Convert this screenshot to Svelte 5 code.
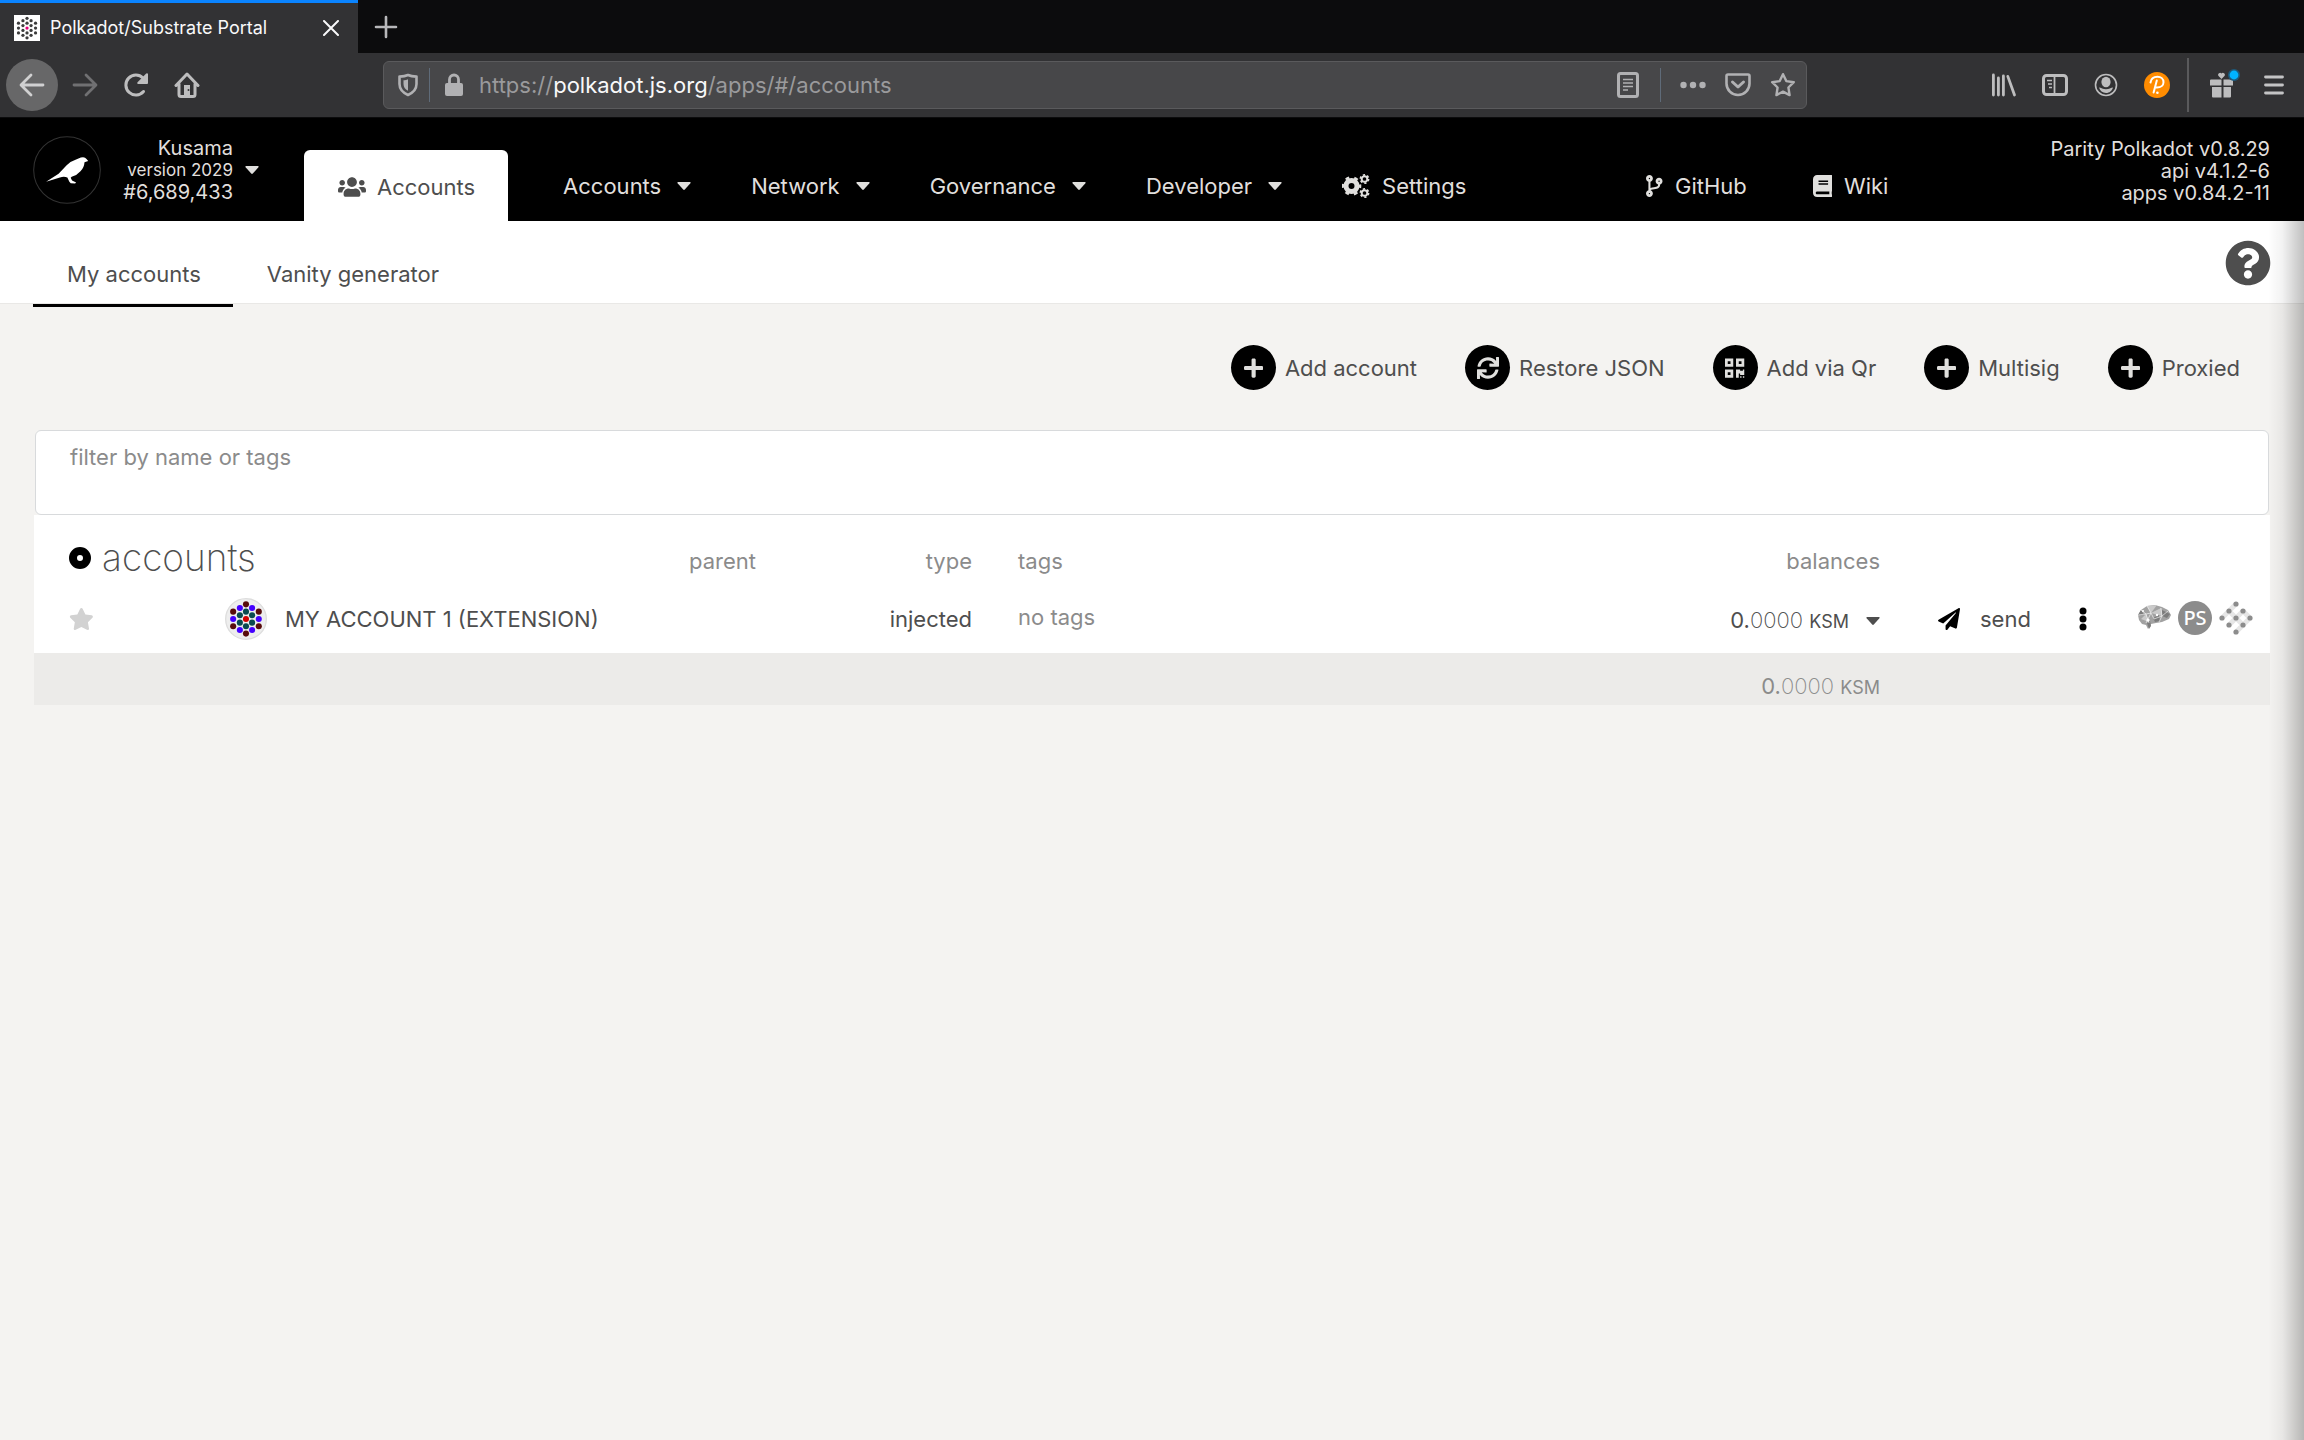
<script lang="ts">
    // tabs of the top menu that open a dropdown
    var groups = ['Accounts', 'Network', 'Governance', 'Developer'];

    var icons = {
        users: { w: 640, d: 'M96 224c35.3 0 64-28.7 64-64s-28.7-64-64-64-64 28.7-64 64 28.7 64 64 64zm448 0c35.3 0 64-28.7 64-64s-28.7-64-64-64-64 28.7-64 64 28.7 64 64 64zm32 32h-64c-17.6 0-33.5 7.1-45.1 18.6 40.3 22.1 68.9 62 75.1 109.4h66c17.7 0 32-14.3 32-32v-32c0-35.3-28.7-64-64-64zm-256 0c61.9 0 112-50.1 112-112S381.9 32 320 32 208 82.1 208 144s50.1 112 112 112zm76.8 32h-8.3c-20.8 10-43.9 16-68.5 16s-47.6-6-68.5-16h-8.3C179.6 288 128 339.6 128 403.2V432c0 26.5 21.5 48 48 48h288c26.5 0 48-21.5 48-48v-28.8c0-63.6-51.6-115.2-115.2-115.2zm-223.7-13.4C161.5 263.1 145.6 256 128 256H64c-35.3 0-64 28.7-64 64v32c0 17.7 14.3 32 32 32h65.9c6.3-47.4 34.9-87.3 75.2-109.4z' },
        branch: { w: 384, d: 'M384 144c0-44.2-35.8-80-80-80s-80 35.8-80 80c0 36.4 24.3 67.1 57.5 76.8-.6 16.1-4.2 28.5-11 36.9-15.4 19.2-49.3 22.4-85.2 25.7-28.2 2.6-57.4 5.4-81.3 16.9v-144c32.5-10.2 56-40.5 56-76.3 0-44.2-35.8-80-80-80S0 35.8 0 80c0 35.8 23.5 66.1 56 76.3v199.3C23.5 365.9 0 396.2 0 432c0 44.2 35.8 80 80 80s80-35.8 80-80c0-34-21.2-63.1-51.2-74.6 3.1-5.2 7.8-9.8 14.9-13.4 16.2-8.2 40.4-10.4 66.1-12.8 42.2-3.9 90-8.4 118.2-43.4 14-17.4 21.1-39.8 21.6-67.9 31.6-10.8 54.4-40.7 54.4-75.9zM80 64c8.8 0 16 7.2 16 16s-7.2 16-16 16-16-7.2-16-16 7.2-16 16-16zm0 384c-8.8 0-16-7.2-16-16s7.2-16 16-16 16 7.2 16 16-7.2 16-16 16zm224-320c8.8 0 16 7.2 16 16s-7.2 16-16 16-16-7.2-16-16 7.2-16 16-16z' },
        book: { w: 448, d: 'M448 360V24c0-13.3-10.7-24-24-24H96C43 0 0 43 0 96v320c0 53 43 96 96 96h328c13.3 0 24-10.7 24-24v-16c0-7.5-3.5-14.3-8.9-18.7-4.2-15.4-4.2-59.3 0-74.7 5.4-4.3 8.9-11.1 8.9-18.6zM128 134c0-3.3 2.7-6 6-6h212c3.3 0 6 2.7 6 6v20c0 3.3-2.7 6-6 6H134c-3.3 0-6-2.7-6-6v-20zm0 64c0-3.3 2.7-6 6-6h212c3.3 0 6 2.7 6 6v20c0 3.3-2.7 6-6 6H134c-3.3 0-6-2.7-6-6v-20zm253.4 250H96c-17.7 0-32-14.3-32-32 0-17.6 14.4-32 32-32h285.4c-1.9 17.1-1.9 46.9 0 64z' },
        help: { w: 512, d: 'M504 256c0 136.997-111.043 248-248 248S8 392.997 8 256C8 119.083 119.043 8 256 8s248 111.083 248 248zM262.655 90c-54.497 0-89.255 22.957-116.549 63.758-3.536 5.286-2.353 12.415 2.715 16.258l34.699 26.31c5.205 3.947 12.621 3.008 16.665-2.122 17.864-22.658 30.113-35.797 57.303-35.797 20.429 0 45.698 13.148 45.698 32.958 0 14.976-12.363 22.667-32.534 33.976C247.128 238.528 216 254.941 216 296v4c0 6.627 5.373 12 12 12h56c6.627 0 12-5.373 12-12v-1.333c0-28.462 83.186-29.647 83.186-106.667 0-58.002-60.165-102-116.531-102zM256 338c-25.365 0-46 20.635-46 46 0 25.364 20.635 46 46 46s46-20.636 46-46c0-25.365-20.635-46-46-46z' },
        plus: { w: 448, d: 'M416 208H272V64c0-17.67-14.33-32-32-32h-32c-17.67 0-32 14.33-32 32v144H32c-17.67 0-32 14.33-32 32v32c0 17.67 14.33 32 32 32h144v144c0 17.67 14.33 32 32 32h32c17.67 0 32-14.33 32-32V304h144c17.67 0 32-14.33 32-32v-32c0-17.67-14.33-32-32-32z' },
        sync: { w: 512, d: 'M440.65 12.57l4 82.77A247.16 247.16 0 0 0 255.83 8C134.73 8 33.91 94.92 12.29 209.82A12 12 0 0 0 24.09 224h49.05a12 12 0 0 0 11.67-9.26 175.91 175.91 0 0 1 317-56.94l-101.46-4.86a12 12 0 0 0-12.57 12v47.41a12 12 0 0 0 12 12H500a12 12 0 0 0 12-12V12a12 12 0 0 0-12-12h-47.37a12 12 0 0 0-11.98 12.57zM255.83 432a175.61 175.61 0 0 1-146-77.8l101.8 4.87a12 12 0 0 0 12.57-12v-47.4a12 12 0 0 0-12-12H12a12 12 0 0 0-12 12V500a12 12 0 0 0 12 12h47.35a12 12 0 0 0 12-12.6l-4.15-82.57A247.17 247.17 0 0 0 255.83 504c121.11 0 221.93-86.92 243.55-201.82a12 12 0 0 0-11.8-14.18h-49.05a12 12 0 0 0-11.67 9.26A175.86 175.86 0 0 1 255.83 432z' },
        qr: { w: 448, d: 'M0 224h192V32H0v192zM64 96h64v64H64V96zm192-64v192h192V32H256zm128 128h-64V96h64v64zM0 480h192V288H0v192zm64-128h64v64H64v-64zm352-64h32v128h-96v-32h-32v96h-64V288h96v32h64v-32zm0 160h32v32h-32v-32zm-64 0h32v32h-32v-32z' },
        star: { w: 576, d: 'M259.3 17.8L194 150.2 47.9 171.5c-26.2 3.8-36.7 36.1-17.7 54.6l105.7 103-25 145.5c-4.5 26.3 23.2 46 46.4 33.7L288 439.6l130.7 68.7c23.2 12.2 50.9-7.4 46.4-33.7l-25-145.5 105.7-103c19-18.5 8.5-50.8-17.7-54.6L382 150.2 316.7 17.8c-11.7-23.6-45.6-23.9-57.4 0z' },
        plane: { w: 512, d: 'M476 3.2L12.5 270.6c-18.1 10.4-15.8 35.6 2.2 43.2L121 358.4l287.3-253.2c5.5-4.9 13.3 2.6 8.6 8.3L176 407v80.5c0 23.6 28.5 32.9 42.5 15.8L282 426l124.6 52.2c14.2 6 30.4-2.9 33-18.2l72-432C515 7.8 493.3-6.8 476 3.2z' }
    };

    var actions = [
        { label: 'Add account', icon: 'plus' },
        { label: 'Restore JSON', icon: 'sync' },
        { label: 'Add via Qr', icon: 'qr' },
        { label: 'Multisig', icon: 'plus' },
        { label: 'Proxied', icon: 'plus' }
    ];

    // the 19 dots of a polkadot identicon, in a 64x64 box
    var dots: number[][] = [
        [32, 8, 0], [32, 20, 2], [32, 32, 3], [32, 44, 2], [32, 56, 0],
        [22, 14, 1], [22, 26, 2], [22, 38, 2], [22, 50, 1],
        [42, 14, 1], [42, 26, 2], [42, 38, 2], [42, 50, 1],
        [11, 20, 0], [11, 32, 1], [11, 44, 0],
        [53, 20, 0], [53, 32, 1], [53, 44, 0]
    ];
    var dotColors = ['#580c0c', '#4400ff', '#0a4a50', '#d40000'];

    var substrateDots = [[17, 3], [10, 10], [24, 10], [3, 17], [17, 17], [31, 17], [10, 24], [24, 24], [17, 31]];

    var filter = '';
    var favorite = false;
</script>

{#snippet icon(name, cls)}
    <svg class="icon {cls}" viewBox="0 0 {icons[name].w} 512" aria-hidden="true"><path fill="currentColor" d={icons[name].d} /></svg>
{/snippet}

{#snippet caret()}
    <svg class="caret" viewBox="0 0 14 8" aria-hidden="true"><path fill="currentColor" d="M1 0h12q1 .4.4 1.2L7.8 7.5q-.8.8-1.6 0L.6 1.2Q0 .4 1 0z" /></svg>
{/snippet}

<div class="browser">
    <div class="tab-strip">
        <div class="browser-tab">
            <svg class="favicon" viewBox="0 0 64 64" aria-hidden="true">
                <rect width="64" height="64" fill="#fff" />
                {#each dots as dot}
                    <circle cx={dot[0]} cy={dot[1]} r="4" fill={dot[2] === 3 ? '#e6007a' : '#3c3c3c'} />
                {/each}
            </svg>
            <span class="browser-tab-title">Polkadot/Substrate Portal</span>
            <button class="chrome-button" aria-label="Close tab">
                <svg class="s16" viewBox="0 0 16 16"><path d="M1 1l14 14M15 1L1 15" stroke="#f9f9fa" stroke-width="2" stroke-linecap="round" /></svg>
            </button>
        </div>
        <button class="chrome-button new-tab" aria-label="New tab">
            <svg class="s24" viewBox="0 0 24 24"><path d="M12 2v20M2 12h20" stroke="#b8b8ba" stroke-width="2.6" stroke-linecap="round" /></svg>
        </button>
    </div>

    <div class="toolbar">
        <div class="toolbar-left">
            <button class="chrome-button back" aria-label="Back">
                <svg class="s26" viewBox="0 0 26 26"><path d="M24 13H3M12 3L2 13l10 10" fill="none" stroke="#d0d0d1" stroke-width="2.8" stroke-linecap="round" stroke-linejoin="round" /></svg>
            </button>
            <button class="chrome-button" aria-label="Forward">
                <svg class="s26" viewBox="0 0 26 26"><path d="M2 13h21M14 3l10 10-10 10" fill="none" stroke="#707072" stroke-width="2.8" stroke-linecap="round" stroke-linejoin="round" /></svg>
            </button>
            <button class="chrome-button" aria-label="Reload">
                <svg class="s26" viewBox="0 0 26 26"><path d="M20.5 19.5A10 10 0 1 1 20 6l2.500 2.500" fill="none" stroke="#bdbdbe" stroke-width="3" stroke-linecap="round" /><path d="M25 2v9q0 1-1 1h-9q-1.500-.5-.5-1.700L23.200 1.600Q24.500.5 25 2z" fill="#bdbdbe" /></svg>
            </button>
            <button class="chrome-button" aria-label="Home">
                <svg class="s26" viewBox="0 0 26 26"><path d="M2 13.500L13 2l11 11.500M5 12v10.500q0 2 2 2h12q2 0 2-2V12" fill="none" stroke="#bdbdbe" stroke-width="3" stroke-linecap="round" stroke-linejoin="round" /><path d="M10 13h6v11h-6z" fill="#bdbdbe" /><circle cx="14.500" cy="18" r="1" fill="#323234" /></svg>
            </button>
        </div>

        <div class="address-bar">
            <svg class="s24" viewBox="0 0 24 24"><path d="M12 2c3 1.500 5.500 1.600 8.500 1.600V11c0 5-3.500 8.700-8.500 11-5-2.300-8.500-6-8.500-11V3.600C6.500 3.600 9 3.500 12 2z" fill="none" stroke="#b1b1b3" stroke-width="2.6" stroke-linejoin="round" /><path d="M12 6.200v11.600C9 16.300 7.500 14 7.500 11V7.200c1.700 0 3-.2 4.500-1z" fill="#b1b1b3" /></svg>
            <span class="bar-line"></span>
            <svg class="s24" viewBox="0 0 24 24"><path d="M7.500 12V6.500a4.500 4.500 0 0 1 9 0V12" fill="none" stroke="#b1b1b3" stroke-width="2.8" /><rect x="3" y="10" width="18" height="13" rx="2" fill="#b1b1b3" /></svg>
            <div class="address" role="textbox" tabindex="0" aria-label="Address" contenteditable="true">https://<b>polkadot.js.org</b>/apps/#/accounts</div>
            <button class="chrome-button" aria-label="Reader view">
                <svg class="s26" viewBox="0 0 26 26"><rect x="3.500" y="1.500" width="19" height="23" rx="2" fill="none" stroke="#b1b1b3" stroke-width="3" /><path d="M8 7.500h10M8 11h10M8 14.500h10M8 18h5" stroke="#b1b1b3" stroke-width="1.4" /></svg>
            </button>
            <span class="bar-line wide"></span>
            <button class="chrome-button" aria-label="Page actions">
                <svg class="s26" viewBox="0 0 26 26" fill="#b1b1b3"><circle cx="3.500" cy="13" r="3.200" /><circle cx="13" cy="13" r="3.200" /><circle cx="22.500" cy="13" r="3.200" /></svg>
            </button>
            <button class="chrome-button" aria-label="Save to Pocket">
                <svg class="s26" viewBox="0 0 26 26" fill="none" stroke="#b1b1b3" stroke-width="2.6" stroke-linecap="round" stroke-linejoin="round"><path d="M3 2.500h20q1.500 0 1.500 1.500v7.500a11.500 11.500 0 0 1-23 0V4q0-1.500 1.500-1.500z" /><path d="M7.500 10l5.500 5 5.500-5" stroke-width="3" /></svg>
            </button>
            <button class="chrome-button" aria-label="Bookmark">
                <svg class="s26" viewBox="0 0 26 26"><path d="M13 2.200l3.300 6.900 7.500 1.100-5.400 5.300 1.200 7.600L13 19.600l-6.600 3.500 1.200-7.600-5.400-5.300 7.500-1.100z" fill="none" stroke="#b1b1b3" stroke-width="2.4" stroke-linejoin="round" /></svg>
            </button>
        </div>

        <div class="toolbar-right">
            <button class="chrome-button" aria-label="Library">
                <svg class="s26" viewBox="0 0 26 26" stroke="#bdbdbe" stroke-width="2.8" stroke-linecap="round"><path d="M2.400 3v20M7.400 6v17M12.400 4v19M16.800 4.400L23.500 23" /></svg>
            </button>
            <button class="chrome-button" aria-label="Sidebar">
                <svg class="s26" viewBox="0 0 26 26" fill="none" stroke="#bdbdbe"><rect x="1.500" y="3.500" width="23" height="19" rx="3" stroke-width="3" /><path d="M12.500 3v20" stroke-width="1.8" /><path d="M5 8.500h5M6 12h4M7 15.500h3" stroke-width="1.6" /></svg>
            </button>
            <button class="chrome-button" aria-label="Profile">
                <svg class="s26" viewBox="0 0 26 26"><circle cx="13" cy="13" r="10.500" fill="none" stroke="#bdbdbe" stroke-width="1.6" /><ellipse cx="13" cy="10" rx="4.600" ry="5.200" fill="#bdbdbe" /><path d="M6 15.500c2 .2 4 1.800 7 1.800s5-1.600 7-1.800c-1 3.300-3.500 5.500-7 5.500s-6-2.200-7-5.500z" fill="#bdbdbe" /></svg>
            </button>
            <button class="chrome-button" aria-label="Polkadot extension">
                <svg class="s26" viewBox="0 0 26 26"><circle cx="13" cy="13" r="13" fill="#ff8c00" /><path d="M6.500 10.500C7 7 9.800 4.800 13.500 4.800c3.400 0 6 2.300 6 5.400 0 3-2.600 5.300-6.500 5.300h-1.800M12.800 8.500L9.600 20.500" fill="none" stroke="#fff" stroke-width="2" stroke-linecap="round" /><circle cx="13.400" cy="20.800" r="1.300" fill="#fff" /></svg>
            </button>
            <span class="toolbar-line"></span>
            <button class="chrome-button gift" aria-label="What's new">
                <svg class="s32" viewBox="0 0 32 32"><g fill="#bdbdbe"><path d="M3 10.500h10.500v6H2V11.500q0-1 1-1zM15.500 10.500H24q1 0 1 1v5h-9.500zM4 18h9.500v10.500H5q-1 0-1-1zM15.500 18H23v9.500q0 1-1 1h-6.500z" /><path d="M13.500 10l-3.200-3.200a2 2 0 0 1 3.200-2.300 2 2 0 0 1 3.200 2.300z" /></g><circle cx="26" cy="6" r="6" fill="#1c5a7c" /><circle cx="26" cy="6" r="4.400" fill="#00b3ff" /></svg>
            </button>
            <button class="chrome-button" aria-label="Menu">
                <svg class="s24" viewBox="0 0 24 24"><path d="M3.500 4h17M3.500 12h17M3.500 20h17" stroke="#c4c4c5" stroke-width="2.8" stroke-linecap="round" /></svg>
            </button>
        </div>
    </div>
</div>

<header class="menu">
    <button class="network">
        <svg class="network-logo" viewBox="100 407 202 202" aria-hidden="true">
            <circle cx="201" cy="508" r="99" fill="#000" stroke="#333" stroke-width="3" />
            <path d="M139 543l37-24 24-25q12-12 28-17l14-6q12-3 17 4l5 6-11 4q-1 16-12 27-10 12-26 16l-3 3 4 8 12 6-3 3-13-1-4-4-6-13q-10-4-22 0z" fill="#fff" />
        </svg>
        <span class="network-info">
            <span>Kusama</span>
            <small>version 2029</small>
            <span>#6,689,433</span>
        </span>
        {@render caret()}
    </button>
    <a class="menu-active" href="#/accounts">{@render icon('users', 'w28')}Accounts</a>
    <nav class="menu-items">
        {#each groups as group}
            <button class="menu-item">{group}{@render caret()}</button>
        {/each}
        <a class="menu-item with-icon" href="#/settings">
            <svg class="w28" viewBox="0 0 28 24" fill="none" stroke="currentColor" aria-hidden="true">
                <circle cx="9.500" cy="12" r="5.500" stroke-width="5" />
                <circle cx="9.500" cy="12" r="8.500" stroke-width="2.6" stroke-dasharray="3.8 5.1" stroke-dashoffset="1.9" />
                <circle cx="22.500" cy="5" r="2.800" stroke-width="1.9" />
                <circle cx="22.500" cy="5" r="4.100" stroke-width="1.7" stroke-dasharray="2.2 2.09" />
                <circle cx="22.500" cy="19" r="2.800" stroke-width="1.9" />
                <circle cx="22.500" cy="19" r="4.100" stroke-width="1.7" stroke-dasharray="2.2 2.09" />
            </svg>
            Settings
        </a>
    </nav>
    <nav class="menu-links">
        <a class="menu-item with-icon" href="#github">{@render icon('branch', '')}GitHub</a>
        <a class="menu-item with-icon" href="#wiki">{@render icon('book', '')}Wiki</a>
    </nav>
    <div class="node-info">
        <div>Parity Polkadot v0.8.29</div>
        <div>api v4.1.2-6</div>
        <div>apps v0.84.2-11</div>
    </div>
</header>

<main>
    <div class="tabs">
        <a class="tab active" href="#/accounts">My accounts</a>
        <a class="tab" href="#/accounts/vanity">Vanity generator</a>
        <button class="help" aria-label="Help">{@render icon('help', 'fill')}</button>
    </div>

    <div class="content">
        <div class="actions">
            {#each actions as action}
                <button class="action"><span class="action-icon">{@render icon(action.icon, '')}</span>{action.label}</button>
            {/each}
        </div>

        <label class="filter">
            <span>filter by name or tags</span>
            <input type="text" bind:value={filter} />
        </label>

        <table>
            <colgroup>
                <col class="col-star" /><col class="col-name" /><col class="col-parent" /><col class="col-type" /><col /><col class="col-balance" /><col class="col-send" /><col class="col-links" />
            </colgroup>
            <thead>
                <tr>
                    <th colspan="2">
                        <h1><svg class="donut" viewBox="0 0 22 22" aria-hidden="true"><circle cx="11" cy="11" r="7" fill="none" stroke="#000" stroke-width="8" /></svg>accounts</h1>
                    </th>
                    <th class="right">parent</th>
                    <th class="right">type</th>
                    <th>tags</th>
                    <th class="right">balances</th>
                    <th colspan="2"></th>
                </tr>
            </thead>
            <tbody>
                <tr>
                    <td><button class="plain star" aria-label="Favorite" on:click={() => favorite = !favorite}>{@render icon('star', '')}</button></td>
                    <td>
                        <div class="account">
                            <svg class="identicon" viewBox="0 0 64 64" aria-hidden="true">
                                <circle cx="32" cy="32" r="31" fill="#eee" stroke="#ddd" stroke-width="2" />
                                <g transform="translate(2.2 2.2) scale(.93)">
                                    {#each dots as dot}
                                        <circle cx={dot[0]} cy={dot[1]} r="5" fill={dotColors[dot[2]]} />
                                    {/each}
                                </g>
                            </svg>
                            MY ACCOUNT 1 (EXTENSION)
                        </div>
                    </td>
                    <td></td>
                    <td class="right">injected</td>
                    <td class="muted">no tags</td>
                    <td>
                        <div class="balance"><span>0.<span class="decimals">0000</span> <small>KSM</small></span>{@render caret()}</div>
                    </td>
                    <td>
                        <div class="send-cell">
                            <button class="plain send">{@render icon('plane', '')}send</button>
                            <button class="plain" aria-label="More">
                                <svg class="more" viewBox="0 0 8 24"><circle cx="4" cy="4" r="3.500" /><circle cx="4" cy="12" r="3.500" /><circle cx="4" cy="20" r="3.500" /></svg>
                            </button>
                        </div>
                    </td>
                    <td>
                        <div class="links">
                            <a href="#polkassembly" aria-label="Polkassembly">
                                <svg class="s34" viewBox="0 0 34 34">
                                    <path d="M1 14l3-5 6-4 8-1 7 2 6 3 3 5-2 4-7 3-6 1-5 1-3 5-2-4-4-1-3-4z" fill="#a2a2a2" />
                                    <path d="M10 5l4 7 6-8zM14 12l10-5 1 8zM4 18l5-5 3 8z" fill="#cacaca" />
                                    <path d="M25 9l8 4-3 4-5-2zM10 22l3-2 1 5-2 3zM16 17l6-3 1 6-5 1zM1 14l3-5 3 5z" fill="#7c7c7c" />
                                    <path d="M1 14l8-1 5-1 3 6 8-3 6-5M10 5l4 7-5 10M24 7l1 8-3 6M4 9l5 4 3 9" fill="none" stroke="#fff" stroke-width=".6" />
                                    <circle cx="11" cy="19" r="1.600" fill="#fff" /><circle cx="20" cy="14" r="1.200" fill="#fff" /><circle cx="6" cy="10" r="1" fill="#fff" />
                                </svg>
                            </a>
                            <a class="ps" href="#polkascan" aria-label="Polkascan">PS</a>
                            <a href="#subscan" aria-label="Subscan">
                                <svg class="s34" viewBox="0 0 34 34">
                                    <path d="M3 17L17 3M10 10l14 14M10 24l7-7M17 17l7-7M24 10l7 7M31 17L17 31" fill="none" stroke="#e6e6e6" stroke-width="5" />
                                    {#each substrateDots as dot}
                                        <circle cx={dot[0]} cy={dot[1]} r="2.600" fill="#8c8c8c" />
                                    {/each}
                                </svg>
                            </a>
                        </div>
                    </td>
                </tr>
            </tbody>
            <tfoot>
                <tr>
                    <td colspan="5"></td>
                    <td class="right">0.<span class="decimals">0000</span> <small>KSM</small></td>
                    <td colspan="2"></td>
                </tr>
            </tfoot>
        </table>
    </div>
    <div class="edge"></div>
</main>

<style>
:global(body) {
  margin: 0;
  background: #f4f3f1;
  font-family: Inter, sans-serif;
  font-size: 22px;
  line-height: 28px;
  color: #4e4e4e;
}
:global(#app) {
  display: flex;
  flex-direction: column;
  min-height: 100vh;
}
button {
  font: inherit;
  color: inherit;
  background: none;
  border: 0;
  padding: 0;
}
a {
  color: inherit;
  text-decoration: none;
}
svg {
  display: block;
  flex: none;
}
.icon { height: 22px; }
.w28 { width: 28px; height: 24px; }
.fill { width: 100%; height: 100%; }
.caret { width: 14px; height: 8px; }
.s16 { width: 16px; height: 16px; }
.s24 { width: 24px; height: 24px; }
.s26 { width: 26px; height: 26px; }
.s32 { width: 32px; height: 32px; }
.s34 { width: 34px; height: 34px; }

.tab-strip {
  display: flex;
  align-items: stretch;
  height: 53px;
  background: #0c0c0d;
}
.browser-tab {
  box-sizing: border-box;
  display: flex;
  align-items: center;
  gap: 10px;
  width: 358px;
  padding: 0 19px 0 14px;
  border-top: 3px solid #0a84ff;
  background: #323234;
  color: #f9f9fa;
  font-size: 18px;
}
.browser-tab-title {
  flex: 1;
  white-space: nowrap;
}
.favicon {
  width: 26px;
  height: 26px;
}
.chrome-button {
  display: flex;
  align-items: center;
  justify-content: center;
}
.new-tab {
  margin-left: 16px;
}
.toolbar {
  box-sizing: border-box;
  display: flex;
  align-items: center;
  height: 65px;
  padding: 0 18px 0 6px;
  background: #323234;
  border-bottom: 1px solid #0c0c0d;
}
.toolbar-left {
  display: flex;
  align-items: center;
  gap: 25px;
  width: 377px;
}
.back {
  width: 52px;
  height: 52px;
  margin-right: -11px;
  border-radius: 50%;
  background: #676768;
}
.address-bar {
  box-sizing: border-box;
  flex: 1;
  display: flex;
  align-items: center;
  gap: 19px;
  height: 48px;
  padding: 0 10px 0 12px;
  background: #474749;
  border: 1px solid #5a5a5c;
  border-radius: 6px;
}
.bar-line {
  width: 1px;
  height: 34px;
  margin: 0 -7px 0 -10px;
  background: #5f6b79;
}
.bar-line.wide {
  margin: 0;
}
.address {
  flex: 1;
  margin-left: -6px;
  color: #9a9a9c;
  white-space: nowrap;
}
.address b {
  color: #f9f9fa;
  font-weight: 400;
}
.toolbar-right {
  display: flex;
  align-items: center;
  gap: 25px;
  margin-left: 184px;
}
.toolbar-line {
  width: 2px;
  height: 54px;
  margin: 0 -6px 0 -8px;
  background: #5a5a5c;
}
.gift {
  margin-right: -3px;
}

.menu {
  display: flex;
  align-items: stretch;
  height: 103px;
  padding: 0 34px 0 33px;
  background: #000;
  color: #e0dfdd;
}
.network {
  display: flex;
  align-items: center;
  gap: 12px;
  width: 271px;
}
.network-logo {
  width: 68px;
  height: 68px;
}
.network-info {
  display: flex;
  flex-direction: column;
  width: 120px;
  text-align: right;
  font-size: 20px;
  line-height: 22px;
}
.network-info small {
  font-size: 17px;
}
.menu-active {
  display: flex;
  align-items: center;
  gap: 11px;
  margin-top: 32px;
  padding: 3px 33px 0 34px;
  border-radius: 6px 6px 0 0;
  background: #fff;
  color: #4e4e4e;
}
.menu-items, .menu-links {
  display: flex;
  gap: 60px;
  padding-top: 32px;
}
.menu-items {
  margin-left: 55px;
}
.menu-links {
  gap: 66px;
  margin: 0 162px 0 auto;
}
.menu-item {
  display: flex;
  align-items: center;
  gap: 16px;
}
.menu-item.with-icon {
  gap: 12px;
}
.node-info {
  align-self: center;
  padding-top: 2px;
  text-align: right;
  font-size: 20px;
  line-height: 22px;
}

main {
  position: relative;
  flex: 1;
}
.tabs {
  display: flex;
  align-items: flex-start;
  height: 82px;
  padding: 0 34px 0 33px;
  background: #fff;
  border-bottom: 1px solid #e9e8e6;
}
.tab {
  padding: 39px 32px 16px 34px;
}
.tab.active {
  border-bottom: 3px solid #000;
}
.help {
  width: 46px;
  height: 46px;
  margin: 19px -1px 0 auto;
}
.content {
  padding: 41px 34px 0;
}
.actions {
  display: flex;
  flex-wrap: wrap;
  justify-content: flex-end;
  gap: 48px;
  padding-right: 30px;
}
.action {
  display: flex;
  align-items: center;
  gap: 9px;
}
.action-icon {
  display: flex;
  align-items: center;
  justify-content: center;
  width: 45px;
  height: 45px;
  border-radius: 50%;
  background: #000;
  color: #e0dfdd;
}
.filter {
  box-sizing: border-box;
  display: flex;
  flex-direction: column;
  height: 85px;
  margin: 40px 1px 0;
  padding: 12px 34px;
  background: #fff;
  border: 1px solid #d8dadc;
  border-radius: 6px;
  color: #8b8b8b;
}
.filter input {
  border: 0;
  padding: 0;
  outline: 0;
  background: none;
  font: inherit;
}
table {
  width: 100%;
  table-layout: fixed;
  border-collapse: collapse;
  background: #fff;
}
.col-star { width: 168px; }
.col-name { width: 438px; }
.col-parent { width: 139px; }
.col-type { width: 216px; }
.col-balance { width: 300px; }
.col-send { width: 211px; }
.col-links { width: 156px; }
th, td {
  padding: 0 23px;
  font-weight: 400;
  text-align: left;
  white-space: nowrap;
}
th {
  height: 48px;
  padding-top: 22px;
  color: #8b8b8b;
}
th:first-child, td:first-child {
  padding-left: 35px;
}
td {
  height: 68px;
}
.right {
  text-align: right;
}
.muted {
  color: #8b8b8b;
}
tbody .muted {
  padding-bottom: 4px;
  height: 64px;
}
h1 {
  display: flex;
  align-items: center;
  gap: 11px;
  margin: 0 0 7px;
  font-size: 37px;
  font-weight: 200;
  line-height: 40px;
  color: #4e4e4e;
}
.donut {
  width: 22px;
  height: 22px;
}
.plain {
  display: flex;
  align-items: center;
}
.star {
  color: #d2d2d2;
}
.account {
  display: flex;
  align-items: center;
  gap: 18px;
}
.identicon {
  width: 42px;
  height: 42px;
}
.balance {
  display: flex;
  align-items: center;
  justify-content: flex-end;
  gap: 17px;
  padding-top: 4px;
}
.decimals {
  font-weight: 200;
}
td small {
  font-size: 18px;
}
.send-cell {
  display: flex;
  align-items: center;
  gap: 48px;
  padding-left: 12px;
}
.send {
  gap: 20px;
}
.send .icon {
  color: #000;
}
.more {
  width: 8px;
  height: 24px;
}
.links {
  display: flex;
  justify-content: flex-end;
  gap: 7px;
  margin-right: -6px;
  padding-bottom: 2px;
}
.ps {
  width: 34px;
  height: 34px;
  border-radius: 50%;
  background: #8c8c8c;
  color: #fff;
  font-size: 20px;
  line-height: 34px;
  text-align: center;
  font-family: "Noto Sans", sans-serif;
  font-weight: 500;
}
tfoot {
  background: #ecebe9;
  color: #8b8b8b;
}
tfoot td {
  height: 36px;
  padding-top: 16px;
}
/* shade along the right border of the page */
.edge {
  position: absolute;
  top: 0;
  right: 0;
  bottom: 0;
  width: 36px;
  background: linear-gradient(to right, rgba(0, 0, 0, 0), rgba(0, 0, 0, .05) 40%, rgba(0, 0, 0, .25));
  pointer-events: none;
}
</style>
